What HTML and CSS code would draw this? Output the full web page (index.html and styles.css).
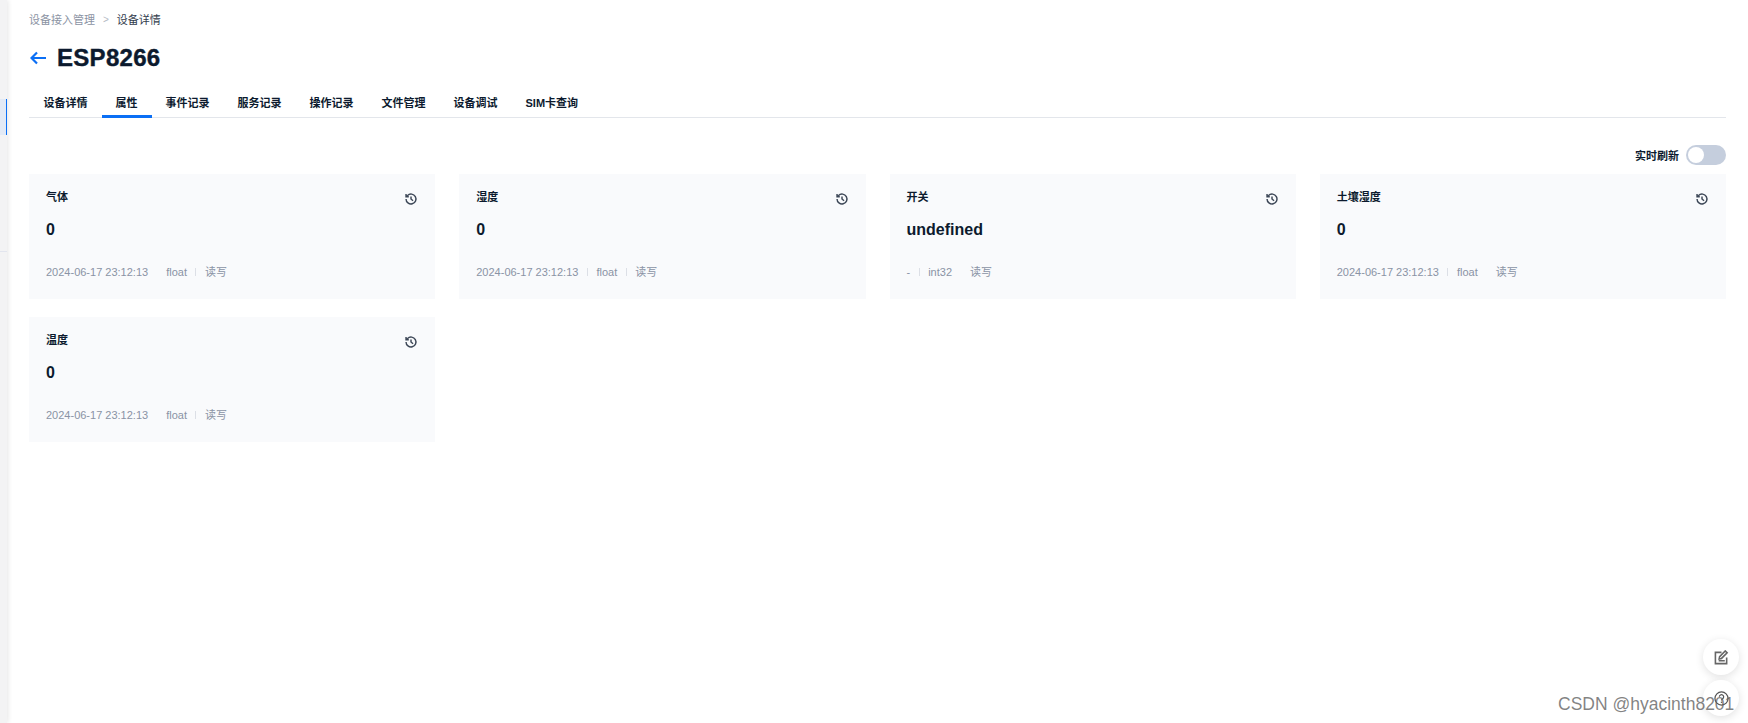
FILE: index.html
```html
<!doctype html>
<html lang="zh-CN">
<head>
  <meta charset="UTF-8">
  <title>设备详情</title>
  <link rel="stylesheet" href="styles.css">
</head>
<body>
  <aside class="sidebar">
    <div class="side-active"></div>
    <div class="side-line"></div>
  </aside>
  <main class="content">
    <div class="crumbs">
      <span class="crumb-link">设备接入管理</span>
      <span class="crumb-sep">&gt;</span>
      <span class="crumb-now">设备详情</span>
    </div>
    <div class="title-row">
      <svg class="back" viewBox="0 0 16 14" width="16" height="14">
        <path d="M7 1.5 1.5 7 7 12.500M1.500 7H16" fill="none" stroke="#0b6ff5" stroke-width="2.200"/>
      </svg>
      <h1>ESP8266</h1>
    </div>
    <nav class="tabs">
      <a href="#" class="tab">设备详情</a>
      <a href="#" class="tab active">属性</a>
      <a href="#" class="tab">事件记录</a>
      <a href="#" class="tab">服务记录</a>
      <a href="#" class="tab">操作记录</a>
      <a href="#" class="tab">文件管理</a>
      <a href="#" class="tab">设备调试</a>
      <a href="#" class="tab">SIM卡查询</a>
    </nav>
    <div class="toolbar">
      <span class="toolbar-label">实时刷新</span>
      <span class="switch"><span class="knob"></span></span>
    </div>
    <div class="grid">
      <section class="card">
        <div class="card-head">
          <span class="card-title">气体</span>
          <svg class="history" viewBox="0 0 24 24" width="14" height="14"><path d="M3.500 12a8.500 8.500 0 1 0 2.600-6.100L3.500 8.200M3.500 3.500v4.700h4.700M12 7.500V12l3.500 3" fill="none" stroke="#3d4757" stroke-width="2.500"/></svg>
        </div>
        <div class="card-value">0</div>
        <div class="card-meta">
          <span>2024-06-17 23:12:13</span><i class="sep faint"></i><span>float</span><i class="sep"></i><span>读写</span>
        </div>
      </section>
      <section class="card">
        <div class="card-head">
          <span class="card-title">湿度</span>
          <svg class="history" viewBox="0 0 24 24" width="14" height="14"><path d="M3.500 12a8.500 8.500 0 1 0 2.600-6.100L3.500 8.200M3.500 3.500v4.700h4.700M12 7.500V12l3.500 3" fill="none" stroke="#3d4757" stroke-width="2.500"/></svg>
        </div>
        <div class="card-value">0</div>
        <div class="card-meta">
          <span>2024-06-17 23:12:13</span><i class="sep"></i><span>float</span><i class="sep"></i><span>读写</span>
        </div>
      </section>
      <section class="card">
        <div class="card-head">
          <span class="card-title">开关</span>
          <svg class="history" viewBox="0 0 24 24" width="14" height="14"><path d="M3.500 12a8.500 8.500 0 1 0 2.600-6.100L3.500 8.200M3.500 3.500v4.700h4.700M12 7.500V12l3.500 3" fill="none" stroke="#3d4757" stroke-width="2.500"/></svg>
        </div>
        <div class="card-value">undefined</div>
        <div class="card-meta">
          <span>-</span><i class="sep"></i><span>int32</span><i class="sep faint"></i><span>读写</span>
        </div>
      </section>
      <section class="card">
        <div class="card-head">
          <span class="card-title">土壤湿度</span>
          <svg class="history" viewBox="0 0 24 24" width="14" height="14"><path d="M3.500 12a8.500 8.500 0 1 0 2.600-6.100L3.500 8.200M3.500 3.500v4.700h4.700M12 7.500V12l3.500 3" fill="none" stroke="#3d4757" stroke-width="2.500"/></svg>
        </div>
        <div class="card-value">0</div>
        <div class="card-meta">
          <span>2024-06-17 23:12:13</span><i class="sep"></i><span>float</span><i class="sep faint"></i><span>读写</span>
        </div>
      </section>
      <section class="card">
        <div class="card-head">
          <span class="card-title">温度</span>
          <svg class="history" viewBox="0 0 24 24" width="14" height="14"><path d="M3.500 12a8.500 8.500 0 1 0 2.600-6.100L3.500 8.200M3.500 3.500v4.700h4.700M12 7.500V12l3.500 3" fill="none" stroke="#3d4757" stroke-width="2.500"/></svg>
        </div>
        <div class="card-value">0</div>
        <div class="card-meta">
          <span>2024-06-17 23:12:13</span><i class="sep faint"></i><span>float</span><i class="sep"></i><span>读写</span>
        </div>
      </section>
    </div>
  </main>
  <div class="fab fab-edit">
    <svg viewBox="0 0 16 16" width="15" height="15"><path d="M8 2.500H1.500v12h12V8M5 11.500h6.500M5.500 9.500l.5-2.500 6-6 2 2-6 6z" fill="none" stroke="#666" stroke-width="1.700"/></svg>
  </div>
  <div class="fab fab-help">
    <svg viewBox="0 0 16 16" width="15" height="15"><circle cx="8" cy="8" r="7" fill="none" stroke="#555" stroke-width="1.300"/><path d="M5.700 6.200a2.300 2.300 0 1 1 3.500 2c-.8.500-1.200.9-1.200 1.800" fill="none" stroke="#555" stroke-width="1.300"/><path d="M7.300 11.300h1.400v1.400H7.300z" fill="#555"/></svg>
  </div>
  <div class="watermark">CSDN @hyacinth8201</div>
</body>
</html>
```

FILE: styles.css
```css
* {
  box-sizing: border-box;
}
html, body {
  height: 100%;
}
body {
  display: flex;
  margin: 0;
  overflow: hidden;
  background-color: #fff;
  color: #0c1a2e;
  font-family: "Liberation Sans", "Noto Sans CJK SC", sans-serif;
  font-size: 11px;
}
.sidebar {
  flex: 0 0 7px;
  padding-top: 99px;
  background-color: #f3f3f4;
  box-shadow: 1px 0 5px rgba(0, 0, 0, .1);
}
.side-active {
  height: 36px;
  background-color: #e2eaf6;
  border-right: 1px solid #0b6ff5;
}
.side-line {
  height: 1px;
  margin-top: 116px;
  background-color: #e2e5ee;
}
.content {
  flex: 1;
  min-width: 0;
  padding: 11px 22px 0;
}

/* header */
.crumbs {
  display: flex;
  align-items: center;
  height: 16px;
  margin-top: 1px;
  line-height: 16px;
}
.crumb-link {
  color: #8b93a3;
}
.crumb-sep {
  margin: 0 8px;
  color: #b5bac4;
  font-size: 10px;
}
.crumb-now {
  color: #333d4d;
}
.title-row {
  display: flex;
  align-items: center;
  gap: 11px;
  height: 30px;
  margin-top: 15px;
}
.back {
  flex: none;
  margin-left: 1px;
}
h1 {
  margin: 0;
  font-size: 24px;
  font-weight: 700;
  line-height: 30px;
  letter-spacing: .3px;
  color: #0c1a2e;
  -webkit-text-stroke: .4px #0c1a2e;
}

/* tabs */
.tabs {
  display: flex;
  height: 45px;
  padding-left: .5px;
  border-bottom: 1px solid #e3e6eb;
}
.tab {
  position: relative;
  padding: 22px 14px 0;
  font-weight: 700;
  line-height: 16px;
  text-decoration: none;
  color: #0c1a2e;
}
.tab.active::after {
  content: "";
  position: absolute;
  left: 0;
  right: 0;
  bottom: -1px;
  height: 3px;
  background-color: #0b6ff5;
}

.toolbar {
  display: flex;
  justify-content: flex-end;
  align-items: center;
  gap: 7px;
  height: 20px;
  margin-top: 27px;
}
.toolbar-label {
  font-weight: 700;
}
.switch {
  display: flex;
  align-items: center;
  width: 40px;
  height: 20px;
  padding: 0 2px;
  border-radius: 10px;
  background-color: #c5cedd;
}
.knob {
  width: 16px;
  height: 16px;
  border-radius: 50%;
  background-color: #fff;
}

/* cards */
.grid {
  display: grid;
  grid-template-columns: repeat(4, 1fr);
  gap: 18px 24px;
  margin-top: 9px;
}
.card {
  height: 125px;
  padding: 15px 17px 0;
  background-color: #f9fafc;
}
.card-head {
  display: flex;
  justify-content: space-between;
  height: 16px;
}
.card-title {
  font-weight: 700;
  line-height: 16px;
}
.history {
  margin-top: 3px;
}
.card-value {
  margin-top: 15px;
  font-size: 16px;
  font-weight: 700;
  line-height: 20px;
}
.card-meta {
  display: flex;
  align-items: center;
  margin-top: 24px;
  line-height: 16px;
  color: #8a93a5;
}
.sep {
  width: 1px;
  height: 8px;
  margin: 0 8.500px;
  background-color: #dcdfe6;
}
.sep.faint {
  background-color: transparent;
}

/* floating */
.fab {
  position: absolute;
  right: 9px;
  display: flex;
  justify-content: center;
  align-items: center;
  width: 36px;
  height: 36px;
  border-radius: 50%;
  background-color: #fff;
  box-shadow: 0 2px 8px rgba(0, 0, 0, .12);
}
.fab-edit {
  top: 639px;
}
.fab-help {
  top: 680px;
}
.watermark {
  position: absolute;
  left: 1558px;
  top: 693px;
  font-family: "Liberation Sans", sans-serif;
  font-size: 17.500px;
  line-height: 22px;
  color: rgba(90, 90, 90, .75);
  white-space: nowrap;
}
```
